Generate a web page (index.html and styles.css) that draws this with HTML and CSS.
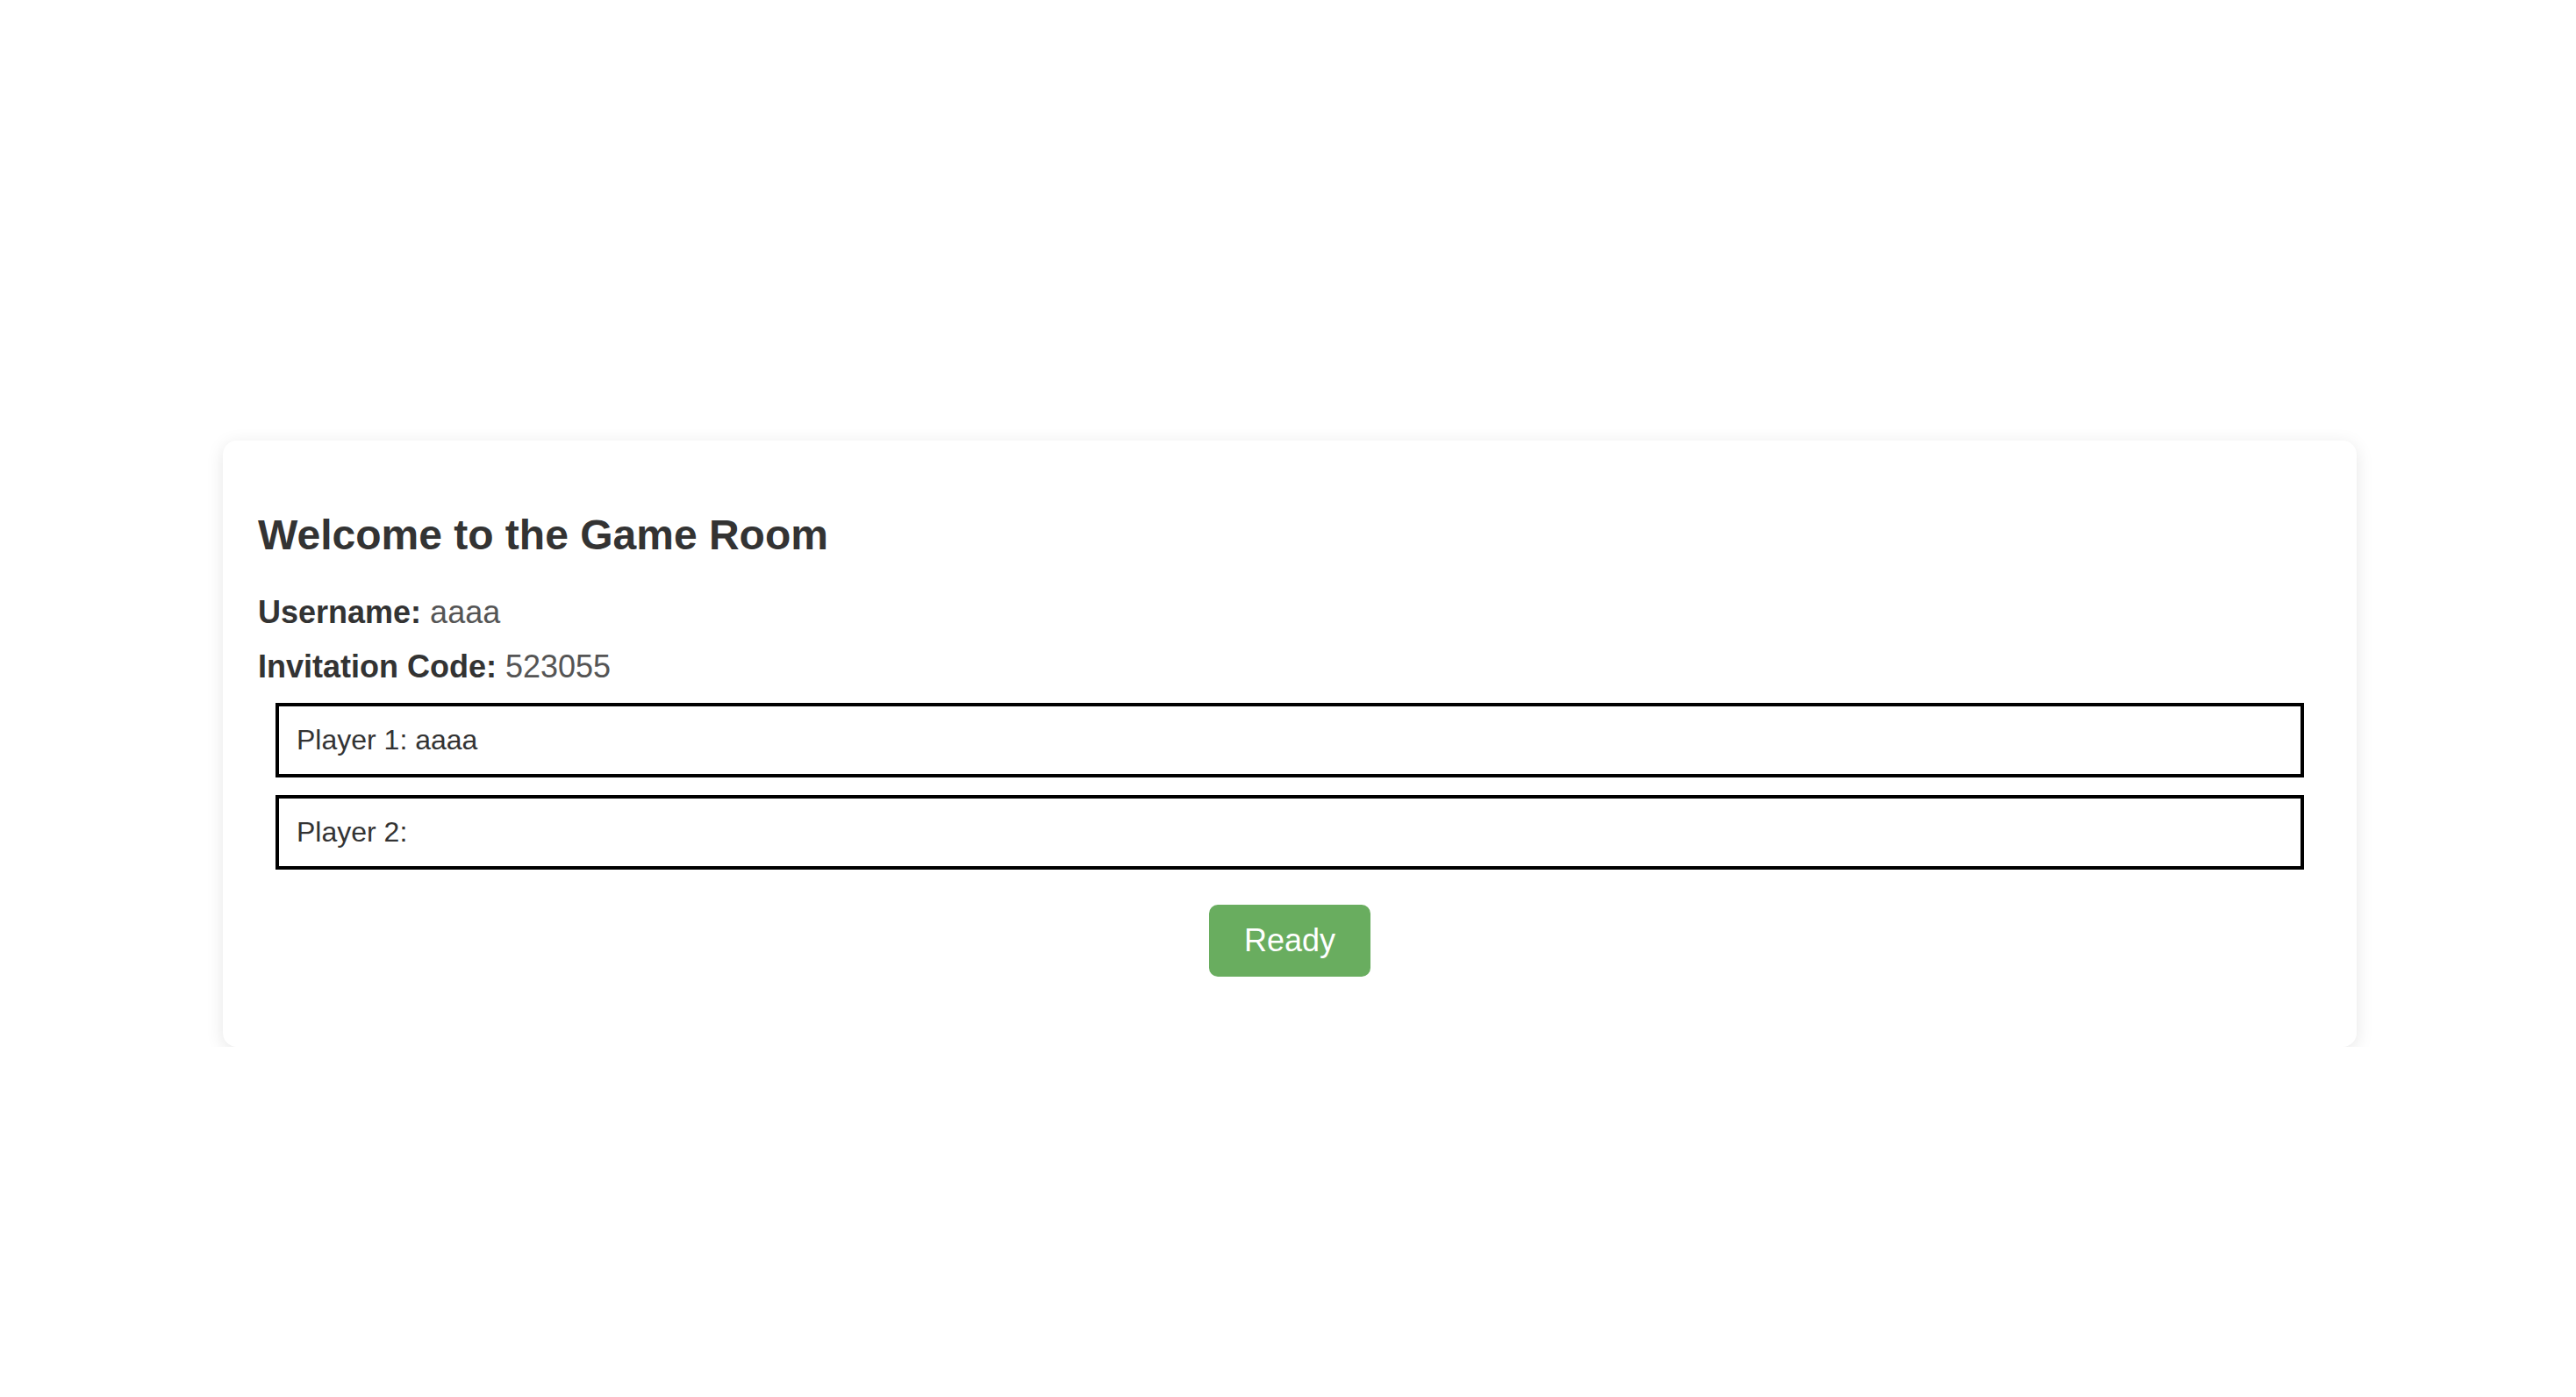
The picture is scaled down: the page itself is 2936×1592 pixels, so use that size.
FILE: index.html
```html
<!DOCTYPE html>
<html lang="en">
<head>
<meta charset="utf-8">
<title>Game Room</title>
<link rel="stylesheet" href="styles.css">
</head>
<body>
<main class="page">
  <section class="card">
    <h2 class="title">Welcome to the Game Room</h2>
    <p class="info"><strong class="label">Username:</strong> <span class="value">aaaa</span></p>
    <p class="info"><strong class="label">Invitation Code:</strong> <span class="value">523055</span></p>
    <div class="players">
      <div class="player">Player 1: aaaa</div>
      <div class="player">Player 2: </div>
    </div>
    <div class="actions">
      <button class="ready-btn" type="button">Ready</button>
    </div>
  </section>
</main>
</body>
</html>
```

FILE: styles.css
```css
html, body {
  margin: 0;
  padding: 0;
  background: #ffffff;
}

body {
  font-family: "Liberation Sans", Arial, Helvetica, sans-serif;
  color: #333333;
}

.page {
  padding: 502px 0 0 4px;
  display: flex;
  justify-content: center;
}

.card {
  width: 2432px;
  box-sizing: border-box;
  padding: 40px;
  background: #ffffff;
  border-radius: 16px;
  box-shadow: 0 4px 20px rgba(0, 0, 0, 0.1);
}

.title {
  font-size: 48px;
  font-weight: bold;
  color: #333333;
  margin: 40px 0 40px;
}

.info {
  font-size: 36px;
  margin: 20px 0;
  color: #333333;
}

.label {
  font-weight: bold;
  color: #333333;
}

.value {
  color: #555555;
}

.players {
  margin: 0;
}

.player {
  margin: 20px 20px;
  padding: 20px;
  border: 4px solid #000000;
  font-size: 32px;
  color: #333333;
}

.actions {
  margin: 40px 0;
  text-align: center;
}

.ready-btn {
  font-family: "Liberation Sans", Arial, Helvetica, sans-serif;
  font-size: 36px;
  color: #ffffff;
  background: #69ad5f;
  border: none;
  border-radius: 10px;
  padding: 20px 40px;
  cursor: pointer;
}
```
